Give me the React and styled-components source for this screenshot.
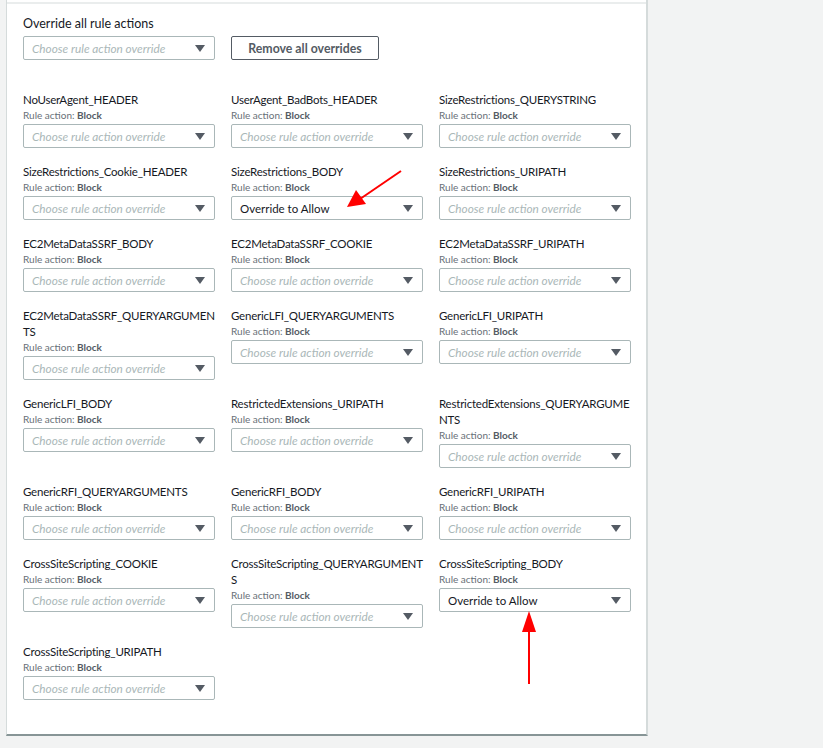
import React from "react";
import styled, { createGlobalStyle } from "styled-components";

const rules = [
  { name: "NoUserAgent_HEADER" },
  { name: "UserAgent_BadBots_HEADER" },
  { name: "SizeRestrictions_QUERYSTRING" },
  { name: "SizeRestrictions_Cookie_HEADER" },
  { name: "SizeRestrictions_BODY", value: "Override to Allow" },
  { name: "SizeRestrictions_URIPATH" },
  { name: "EC2MetaDataSSRF_BODY" },
  { name: "EC2MetaDataSSRF_COOKIE" },
  { name: "EC2MetaDataSSRF_URIPATH" },
  { name: "EC2MetaDataSSRF_QUERYARGUMENTS" },
  { name: "GenericLFI_QUERYARGUMENTS" },
  { name: "GenericLFI_URIPATH" },
  { name: "GenericLFI_BODY" },
  { name: "RestrictedExtensions_URIPATH" },
  { name: "RestrictedExtensions_QUERYARGUMENTS" },
  { name: "GenericRFI_QUERYARGUMENTS" },
  { name: "GenericRFI_BODY" },
  { name: "GenericRFI_URIPATH" },
  { name: "CrossSiteScripting_COOKIE" },
  { name: "CrossSiteScripting_QUERYARGUMENTS" },
  { name: "CrossSiteScripting_BODY", value: "Override to Allow" },
  { name: "CrossSiteScripting_URIPATH" },
];

const PLACEHOLDER = "Choose rule action override";

function Select({ value }) {
  return (
    <SelectBox>
      <SelectText $placeholder={!value}>{value || PLACEHOLDER}</SelectText>
      <Caret />
    </SelectBox>
  );
}

export default function App() {
  return (
    <>
      <GlobalStyle />
      <Page>
        <Panel>
          <Body>
            <TopLabel>Override all rule actions</TopLabel>
            <TopRow>
              <Select />
              <Button>Remove all overrides</Button>
            </TopRow>
            <RuleGrid>
              {rules.map((r) => (
                <Rule key={r.name}>
                  <RuleName>{r.name}</RuleName>
                  <RuleAction>
                    Rule action: <b>Block</b>
                  </RuleAction>
                  <Select value={r.value} />
                </Rule>
              ))}
            </RuleGrid>
          </Body>
        </Panel>
        <Arrows width="823" height="748" viewBox="0 0 823 748">
          <line x1="401" y1="171" x2="360" y2="199" stroke="#f00" strokeWidth="2" />
          <polygon points="347,207 356,190 366,204" fill="#f00" />
          <line x1="529" y1="684" x2="529" y2="628" stroke="#f00" strokeWidth="2" />
          <polygon points="529,611 522,632 536,632" fill="#f00" />
        </Arrows>
      </Page>
    </>
  );
}

const GlobalStyle = createGlobalStyle`
  body {
    margin: 0;
    background: #f2f3f3;
    font-family: Lato, "Liberation Sans", sans-serif;
    color: #16191f;
  }
`;

const Page = styled.div`
  position: relative;
  width: 823px;
  height: 748px;
  overflow: hidden;
  padding-left: 6px;
  box-sizing: border-box;
`;

const Panel = styled.div`
  width: 642px;
  height: 736px;
  background: #fff;
  padding-top: 2px;
  box-sizing: border-box;
  border-left: 1px solid #d5dbdb;
  border-right: 2px solid #d5dbdb;
  border-bottom: 2px solid #879596;
`;

const Body = styled.div`
  border-top: 2px solid #eaeded;
  padding: 11px 16px 0 16px;
`;

const TopLabel = styled.div`
  font-size: 12.5px;
  line-height: 18px;
`;

const TopRow = styled.div`
  display: flex;
  align-items: center;
  gap: 16px;
  margin-top: 3px;
  width: 608px;
  & > div {
    width: 192px;
  }
`;

const Button = styled.button`
  width: 148px;
  height: 24px;
  background: #fff;
  border: 1px solid #545b64;
  border-radius: 2px;
  font-family: Lato, "Liberation Sans", sans-serif;
  font-weight: 700;
  font-size: 12.3px;
  color: #545b64;
  padding: 0;
`;

const RuleGrid = styled.div`
  display: grid;
  grid-template-columns: repeat(3, 192px);
  column-gap: 16px;
  row-gap: 16px;
  margin-top: 32px;
`;

const Rule = styled.div`
  display: flex;
  flex-direction: column;
`;

const RuleName = styled.div`
  font-size: 11.5px;
  letter-spacing: -0.22px;
  line-height: 16px;
  word-break: break-all;
`;

const RuleAction = styled.div`
  font-size: 10px;
  line-height: 14px;
  color: #687078;
  margin-bottom: 2px;
  b {
    font-weight: 700;
    color: #545b64;
  }
`;

const SelectBox = styled.div`
  width: 192px;
  height: 24px;
  box-sizing: border-box;
  border: 1px solid #aab7b8;
  border-radius: 2px;
  display: flex;
  align-items: center;
  justify-content: space-between;
  padding: 0 9px 0 8px;
  background: #fff;
`;

const SelectText = styled.span`
  font-size: ${(p) => (p.$placeholder ? "11.8px" : "11.5px")};
  font-style: ${(p) => (p.$placeholder ? "italic" : "normal")};
  color: ${(p) => (p.$placeholder ? "#aab7b8" : "#16191f")};
  white-space: nowrap;
`;

const Caret = styled.span`
  width: 0;
  height: 0;
  border-left: 5px solid transparent;
  border-right: 5px solid transparent;
  border-top: 7px solid #545b64;
`;

const Arrows = styled.svg`
  position: absolute;
  left: 0;
  top: 0;
  pointer-events: none;
`;
